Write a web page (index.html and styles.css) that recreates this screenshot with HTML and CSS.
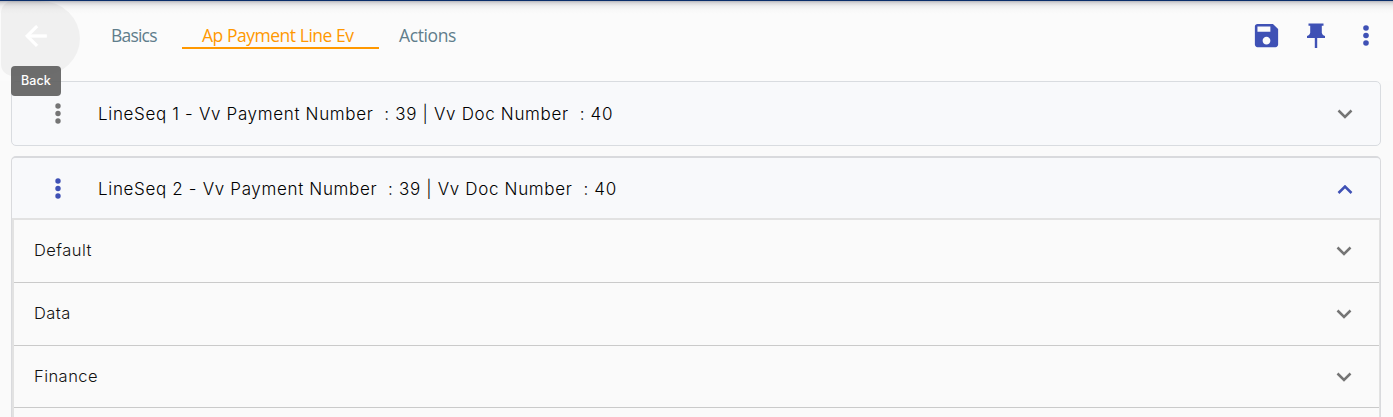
FILE: index.html
```
<!DOCTYPE html>
<html lang="en">
<head>
<meta charset="utf-8">
<title>Ap Payment Line Ev</title>
<link rel="stylesheet" href="styles.css">
</head>
<body>
<header class="toolbar">
  <button class="back" aria-label="Back">
    <svg width="32" height="32" viewBox="0 0 24 24"><path fill="#fff" stroke="#fff" stroke-width=".5" d="M20 11H7.83l5.59-5.59L12 4l-8 8 8 8 1.41-1.41L7.83 13H20v-2z"/></svg>
  </button>
  <span class="tooltip"><span class="t-back">Back</span></span>
  <nav class="tabs">
    <a class="tab"><span class="t-basics">Basics</span></a>
    <a class="tab active"><span class="t-line">Ap Payment Line Ev</span></a>
    <a class="tab"><span class="t-actions">Actions</span></a>
  </nav>
  <div class="actions">
    <svg class="save" width="31" height="31" viewBox="0 0 24 24"><path d="M17 3H5c-1.11 0-2 .9-2 2v14c0 1.1.89 2 2 2h14c1.1 0 2-.9 2-2V7l-4-4zm-5 16c-1.66 0-3-1.34-3-3s1.34-3 3-3 3 1.34 3 3-1.34 3-3 3zm3-10H5V5h10v4z"/></svg>
    <svg class="pin" width="18" height="26" viewBox="0 0 18 26"><path d="M1.5.5h15v2.2h-1.7v7.1c.5 1.8 1.6 2.8 3.2 3.3v1.8h-7.8V25H7.8V14.9H0v-1.8c1.6-.5 2.7-1.5 3.2-3.3V2.7H1.5z"/></svg>
    <svg class="more" width="6" height="22" viewBox="0 0 6 22"><circle cx="3" cy="3" r="2.8"/><circle cx="3" cy="10.5" r="2.8"/><circle cx="3" cy="18" r="2.8"/></svg>
  </div>
</header>
<main class="panels">
  <section class="panel">
    <div class="head">
      <svg class="dots" width="6" height="22" viewBox="0 0 6 22"><circle cx="3" cy="3" r="2.7"/><circle cx="3" cy="10.5" r="2.7"/><circle cx="3" cy="18" r="2.7"/></svg>
      <span class="title">LineSeq 1 - Vv Payment Number&nbsp; : 39 | Vv Doc Number&nbsp; : 40</span>
      <svg class="chevron" width="16" height="10" viewBox="0 0 16 10"><path d="M1.5 1.5 8 8l6.5-6.5"/></svg>
    </div>
  </section>
  <section class="panel open">
    <div class="head">
      <svg class="dots" width="6" height="22" viewBox="0 0 6 22"><circle cx="3" cy="3" r="2.7"/><circle cx="3" cy="10.5" r="2.7"/><circle cx="3" cy="18" r="2.7"/></svg>
      <span class="title">LineSeq 2 - Vv Payment Number&nbsp; : 39 | Vv Doc Number&nbsp; : 40</span>
      <svg class="chevron" width="16" height="10" viewBox="0 0 16 10"><path d="M1.5 8 8 1.5 14.5 8"/></svg>
    </div>
    <div class="body">
      <div class="row"><span class="label">Default</span><svg class="chevron" width="16" height="10" viewBox="0 0 16 10"><path d="M1.5 1.5 8 8l6.5-6.5"/></svg></div>
      <div class="row"><span class="label">Data</span><svg class="chevron" width="16" height="10" viewBox="0 0 16 10"><path d="M1.5 1.5 8 8l6.5-6.5"/></svg></div>
      <div class="row short"><span class="label">Finance</span><svg class="chevron" width="16" height="10" viewBox="0 0 16 10"><path d="M1.5 1.5 8 8l6.5-6.5"/></svg></div>
    </div>
  </section>
</main>
</body>
</html>
```
FILE: styles.css
```
* { box-sizing: border-box; }
html, body { height: 100%; }
body {
  display: flex;
  flex-direction: column;
  margin: 0;
  overflow: hidden;
  background: #fafafa;
  font-family: "Inter", "Liberation Sans", sans-serif;
  color: #000;
}
svg { display: block; flex: none; }
.toolbar {
  position: relative;
  display: flex;
  flex: none;
  align-items: flex-start;
  height: 81px;
  border-top: 1px solid #0b2f6b;
  background: linear-gradient(#b5b5bb 0, #d9d8da 2px, #eeeeef 5px, #f8f8f8 9px, #fbfbfb 13px);
}
.back {
  display: flex;
  align-items: center;
  justify-content: flex-start;
  width: 79px;
  height: 75px;
  margin: 0 0 0 1px;
  padding: 0 0 5px 19px;
  border: 0;
  border-radius: 12px 40px 40px 12px / 12px 38px 38px 12px;
  background: rgba(0, 0, 0, .045);
}
.tooltip {
  position: absolute;
  z-index: 2;
  left: 11px;
  top: 65px;
  display: flex;
  align-items: center;
  justify-content: center;
  width: 50px;
  height: 30px;
  padding-bottom: 1px;
  border-radius: 4px;
  background: rgba(97, 97, 97, .92);
  color: #fff;
  font-size: 12.5px;
  font-weight: 500;
}
.t-back { letter-spacing: .1px; }
.tabs {
  display: flex;
  margin-left: 11px;
  padding-top: 19px;
  font-family: "Open Sans", "Noto Sans", sans-serif;
  font-size: 17.5px;
  line-height: 30px;
  color: #607d8b;
}
.tab {
  height: 29px;
  padding: 0 20px;
  white-space: nowrap;
}
.tab:first-child { width: 91px; }
.tab:first-child, .tab:last-child { padding-right: 0; }
.active {
  width: 197px;
  border-bottom: 2px solid #ff9800;
  color: #ff9800;
}
.t-basics { letter-spacing: -.8px; }
.t-line { letter-spacing: -.47px; }
.t-actions { letter-spacing: -.4px; }
.actions {
  display: flex;
  margin-left: auto;
  padding: 19px 24px 0 0;
  fill: #3f51b5;
}
.pin { margin: 3px 0 0 25px; }
.more { margin: 5px 0 0 38px; }
.panels {
  flex: 1;
  min-height: 0;
  padding: 0 12px 0 11px;
  overflow: hidden;
}
.panel {
  height: 65px;
  border: 1px solid #d9dce0;
  border-radius: 5px;
  background: #f8f9fb;
}
.open {
  height: 270px;
  margin-top: 10px;
  border-top: 2px solid #d9dadd;
  border-color: #d9dadd;
  background: #fafafa;
}
.head {
  display: flex;
  align-items: center;
  height: 63px;
  padding: 0 27px 0 42px;
}
.open .head {
  height: 60px;
  padding-top: 2px;
  border-radius: 4px 4px 0 0;
  background: #f8f9fb;
}
.dots { margin-left: 1px; fill: #757575; }
.open .dots { fill: #3f51b5; }
.title {
  margin-left: 37px;
  font-size: 17px;
  font-weight: 300;
  line-height: 24px;
  letter-spacing: .66px;
  white-space: nowrap;
}
.chevron {
  margin-left: auto;
  fill: none;
  stroke: #757575;
  stroke-width: 2.5;
}
.head .chevron { margin-top: 1px; }
.open .head .chevron { stroke: #3f51b5; }
.body {
  height: 210px;
  border: solid #e2e2e2;
  border-width: 2px 1px 0 2px;
}
.row {
  display: flex;
  align-items: center;
  height: 63px;
  padding: 0 27px 0 20px;
  border-bottom: 1px solid #cacaca;
}
.short { height: 62px; }
.label {
  padding-bottom: 2px;
  font-size: 16.5px;
  font-weight: 300;
  letter-spacing: .45px;
  color: #111;
}
```
